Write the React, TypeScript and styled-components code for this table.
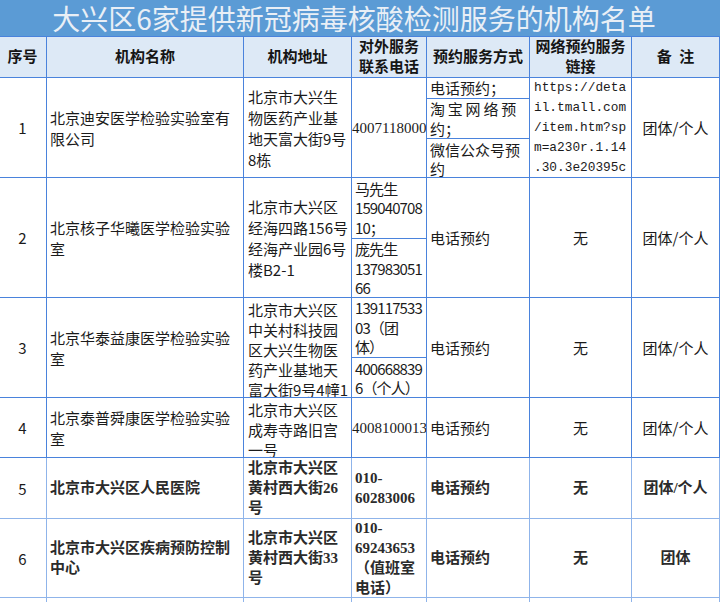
import React from 'react'
import styled, { createGlobalStyle, css } from 'styled-components'

const LINE = '#4a83dc'
const FAINT = '#8fb4ea'

const GlobalStyle = createGlobalStyle`
  html, body {
    margin: 0;
    padding: 0;
    background: #ffffff;
  }
  body {
    font-family: 'Noto Sans CJK SC', sans-serif;
    color: #1b1b1b;
  }
`

const Sheet = styled.div`
  width: 720px;
  height: 602px;
  overflow: hidden;
  display: flex;
  flex-direction: column;
  background: #ffffff;
`

const TitleBar = styled.div`
  flex: 0 0 36px;
  background: #5b9bd5;
  color: #e9eff6;
  font: 400 28px/36px 'Noto Sans CJK SC', sans-serif;
  text-align: center;
  padding-right: 12px;
  white-space: nowrap;
  overflow: hidden;
`

const Grid = styled.div`
  display: grid;
  grid-template-columns: 48px 197px 108px 75px 103px 102px 88px;
  grid-template-rows: 41px 100px 120px 100px 60px 61px 79px 30px;
  width: 721px;
  margin-left: -1px;
  border-top: 1px solid ${LINE};
`

type Tone = 'plain' | 'serif' | 'mono' | 'print' | 'narrow'

const tones: Record<Tone, ReturnType<typeof css>> = {
  plain: css`
    font: 400 15px/21px 'Noto Sans CJK SC', sans-serif;
  `,
  narrow: css`
    font: 400 15px/20px 'Noto Sans CJK SC', sans-serif;
    letter-spacing: -0.9px;
  `,
  serif: css`
    font: 400 15px/20px 'Liberation Serif', 'Noto Sans CJK SC', serif;
  `,
  mono: css`
    font: 400 12.8px/20px 'Liberation Mono', 'Noto Sans CJK SC', monospace;
  `,
  print: css`
    font: 700 15px/20px 'Liberation Serif', 'Noto Sans CJK SC', serif;
    color: #2b2b2b;
  `
}

interface CellProps {
  $align?: 'left' | 'center'
  $valign?: 'top' | 'center'
  $tone?: Tone
  $faint?: boolean
  $pad?: number
  $lh?: number
}

const Cell = styled.div<CellProps>`
  display: flex;
  flex-direction: column;
  justify-content: ${p => (p.$valign === 'top' ? 'flex-start' : 'center')};
  text-align: ${p => p.$align ?? 'left'};
  padding: ${p => (p.$valign === 'top' ? '2px' : '0')} ${p => p.$pad ?? 3}px 0;
  border-right: 1px solid ${p => (p.$faint ? FAINT : LINE)};
  border-bottom: 1px solid ${p => (p.$faint ? FAINT : LINE)};
  overflow: hidden;
  min-width: 0;
  ${p => tones[p.$tone ?? 'plain']}
  ${p => p.$lh && css`line-height: ${p.$lh}px;`}
`

const HeadCell = styled(Cell)`
  background: #dde9f6;
  text-align: center;
  font: 700 15px/20px 'Liberation Serif', 'Noto Sans CJK SC', serif;
  color: #151515;
`

const SplitCell = styled.div`
  display: flex;
  flex-direction: column;
  border-right: 1px solid ${LINE};
  border-bottom: 1px solid ${LINE};
  overflow: hidden;
  min-width: 0;
`

const Part = styled.div<{ $h: number; $tone?: Tone }>`
  flex: 0 0 ${p => p.$h}px;
  display: flex;
  flex-direction: column;
  justify-content: center;
  padding: 0 3px;
  overflow: hidden;
  ${p => tones[p.$tone ?? 'plain']}
  line-height: 19.5px;
  & + & {
    border-top: 1px solid ${LINE};
  }
`

const Line = styled.div<{ $spread?: boolean }>`
  white-space: nowrap;
  ${p => p.$spread && css`letter-spacing: 2.8px;`}
`

const Lines = ({ text }: { text: string[] }) => (
  <>
    {text.map((t, i) => (
      <Line key={i}>{t}</Line>
    ))}
  </>
)

const Empty = styled(Cell)``

const App = (): JSX.Element => {
  return (
    <Sheet>
      <GlobalStyle />
      <TitleBar>大兴区6家提供新冠病毒核酸检测服务的机构名单</TitleBar>
      <Grid>
        <HeadCell>序号</HeadCell>
        <HeadCell>机构名称</HeadCell>
        <HeadCell>机构地址</HeadCell>
        <HeadCell $pad={1}>
          <Lines text={['对外服务', '联系电话']} />
        </HeadCell>
        <HeadCell $pad={1}>预约服务方式</HeadCell>
        <HeadCell $pad={1}>
          <Lines text={['网络预约服务', '链接']} />
        </HeadCell>
        <HeadCell>{'备\u00a0\u00a0注'}</HeadCell>

        {/* 1 */}
        <Cell $align='center'>1</Cell>
        <Cell>
          <Lines text={['北京迪安医学检验实验室有', '限公司']} />
        </Cell>
        <Cell $pad={4}>
          <Lines text={['北京市大兴生', '物医药产业基', '地天富大街9号', '8栋']} />
        </Cell>
        <Cell $align='center' $tone='serif' $pad={0}>4007118000</Cell>
        <SplitCell>
          <Part $h={20}>
            <Line>电话预约；</Line>
          </Part>
          <Part $h={39}>
            <Line $spread>淘宝网络预</Line>
            <Line>约；</Line>
          </Part>
          <Part $h={40}>
            <Lines text={['微信公众号预', '约']} />
          </Part>
        </SplitCell>
        <Cell $tone='mono' $pad={4}>
          <Lines text={['https://deta', 'il.tmall.com', '/item.htm?sp', 'm=a230r.1.14', '.30.3e20395c']} />
        </Cell>
        <Cell $align='center'>团体/个人</Cell>

        {/* 2 */}
        <Cell $align='center'>2</Cell>
        <Cell>
          <Lines text={['北京核子华曦医学检验实验', '室']} />
        </Cell>
        <Cell $pad={4}>
          <Lines text={['北京市大兴区', '经海四路156号', '经海产业园6号', '楼B2-1']} />
        </Cell>
        <SplitCell>
          <Part $h={60} $tone='narrow'>
            <Lines text={['马先生', '159040708', '10；']} />
          </Part>
          <Part $h={59} $tone='narrow'>
            <Lines text={['庞先生', '137983051', '66']} />
          </Part>
        </SplitCell>
        <Cell>电话预约</Cell>
        <Cell $align='center'>无</Cell>
        <Cell $align='center'>团体/个人</Cell>

        {/* 3 */}
        <Cell $align='center'>3</Cell>
        <Cell>
          <Lines text={['北京华泰益康医学检验实验', '室']} />
        </Cell>
        <Cell $valign='top' $pad={4} $lh={20}>
          <Lines text={['北京市大兴区', '中关村科技园', '区大兴生物医', '药产业基地天', '富大街9号4幢1']} />
        </Cell>
        <SplitCell>
          <Part $h={59} $tone='narrow'>
            <Lines text={['139117533', '03（团', '体）']} />
          </Part>
          <Part $h={40} $tone='narrow'>
            <Lines text={['400668839', '6（个人）']} />
          </Part>
        </SplitCell>
        <Cell>电话预约</Cell>
        <Cell $align='center'>无</Cell>
        <Cell $align='center'>团体/个人</Cell>

        {/* 4 */}
        <Cell $align='center'>4</Cell>
        <Cell>
          <Lines text={['北京泰普舜康医学检验实验', '室']} />
        </Cell>
        <Cell $valign='top' $pad={4} $lh={20}>
          <Lines text={['北京市大兴区', '成寿寺路旧宫', '一号']} />
        </Cell>
        <Cell $align='center' $tone='serif' $pad={0}>4008100013</Cell>
        <Cell>电话预约</Cell>
        <Cell $align='center'>无</Cell>
        <Cell $align='center'>团体/个人</Cell>

        {/* 5 */}
        <Cell $align='center' $faint>5</Cell>
        <Cell $tone='print' $faint>北京市大兴区人民医院</Cell>
        <Cell $tone='print' $faint $pad={4}>
          <Lines text={['北京市大兴区', '黄村西大街26', '号']} />
        </Cell>
        <Cell $tone='print' $faint>
          <Lines text={['010-', '60283006']} />
        </Cell>
        <Cell $tone='print' $faint>电话预约</Cell>
        <Cell $tone='print' $faint $align='center'>无</Cell>
        <Cell $tone='print' $faint $align='center'>团体/个人</Cell>

        {/* 6 */}
        <Cell $align='center' $faint>6</Cell>
        <Cell $tone='print' $faint>
          <Lines text={['北京市大兴区疾病预防控制', '中心']} />
        </Cell>
        <Cell $tone='print' $faint $pad={4}>
          <Lines text={['北京市大兴区', '黄村西大街33', '号']} />
        </Cell>
        <Cell $tone='print' $faint>
          <Lines text={['010-', '69243653', '（值班室', '电话）']} />
        </Cell>
        <Cell $tone='print' $faint>电话预约</Cell>
        <Cell $tone='print' $faint $align='center'>无</Cell>
        <Cell $tone='print' $faint $align='center'>团体</Cell>

        {/* 7 */}
        <Empty $faint />
        <Empty $faint />
        <Empty $faint />
        <Empty $faint />
        <Empty $faint />
        <Empty $faint />
        <Empty $faint />
      </Grid>
    </Sheet>
  )
}

export default App
